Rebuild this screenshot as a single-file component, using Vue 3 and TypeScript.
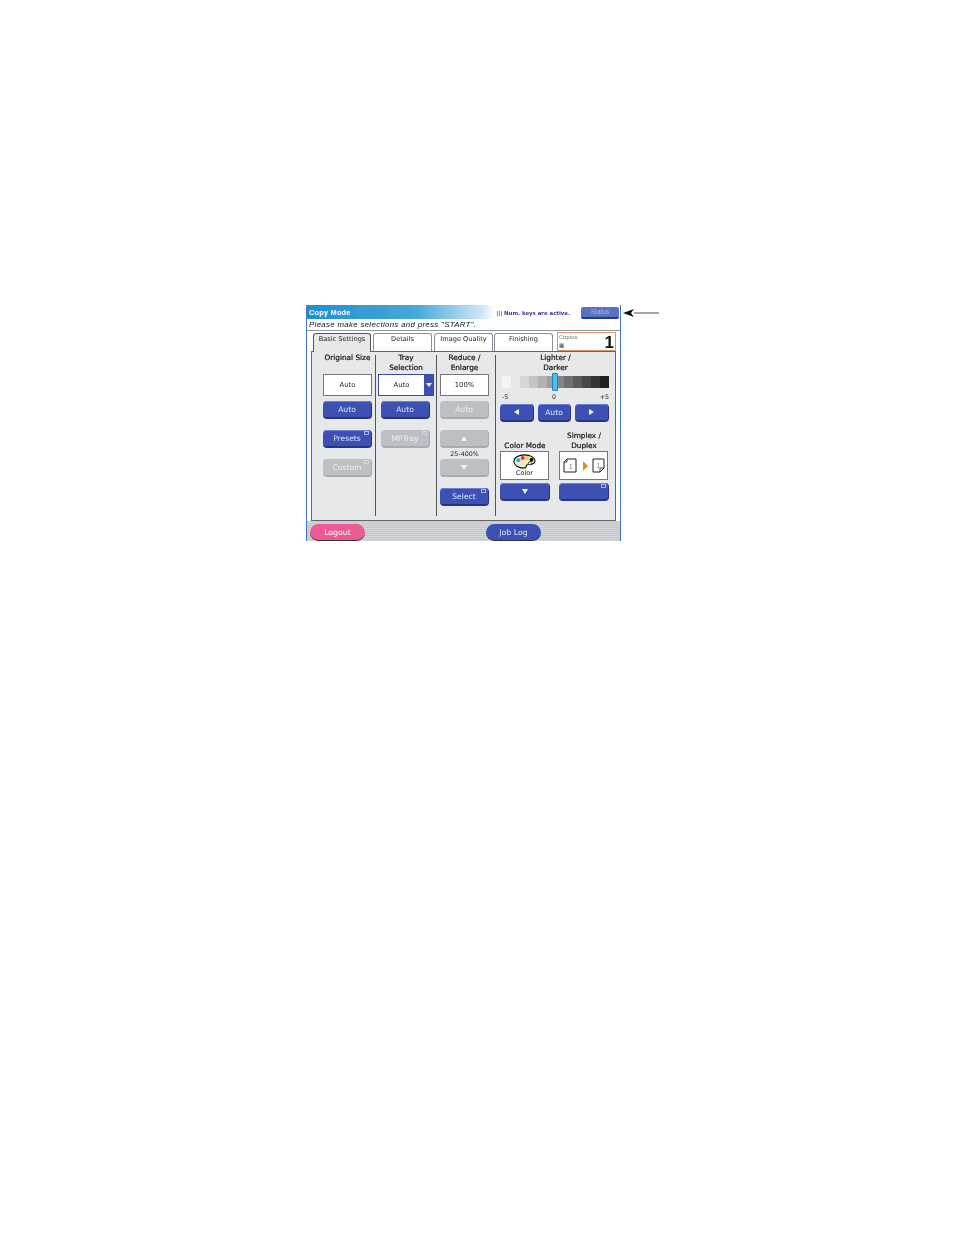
<script setup lang="ts">
const tabs = ['Basic Settings', 'Details', 'Image Quality', 'Finishing']
const shades = ['#f4f4f4', '#e8e8e8', '#d6d6d6', '#c4c4c4', '#b2b2b2', '#9e9e9e', '#858585', '#707070', '#5c5c5c', '#484848', '#343434', '#1e1e1e']
</script>

<template>
  <div class="page">
    <div class="window">
      <div class="titlebar">
        <span class="title">Copy Mode</span>
        <span class="keys"><span class="keys-icon">|||</span> Num. keys are active.</span>
        <button class="status">Status</button>
      </div>
      <div class="message">Please make selections and press "START".</div>
      <div class="tabrow">
        <div v-for="(t, i) in tabs" :key="t" class="tab" :class="{ active: i === 0 }">{{ t }}</div>
        <div class="copies">
          <div class="copies-text"><span>Copies</span><span class="copies-grid">▦</span></div>
          <div class="copies-num">1</div>
        </div>
      </div>

      <div class="panel">
        <section class="col col1">
          <h3 class="head one">Original Size</h3>
          <div class="box">Auto</div>
          <button class="btn blue m5">Auto</button>
          <button class="btn blue m11 corner">Presets</button>
          <button class="btn gray m11 corner">Custom</button>
        </section>

        <section class="col col2">
          <h3 class="head">Tray<br />Selection</h3>
          <div class="tray">
            <div class="tray-value">Auto</div>
            <div class="tray-arrow"><i class="tri down small"></i></div>
          </div>
          <button class="btn blue m5">Auto</button>
          <button class="btn gray m11 corner">MPTray</button>
        </section>

        <section class="col col3">
          <h3 class="head">Reduce /<br />Enlarge</h3>
          <div class="box">100%</div>
          <button class="btn gray m5">Auto</button>
          <button class="btn gray m11"><i class="tri up"></i></button>
          <div class="range">25-400%</div>
          <button class="btn gray"><i class="tri down"></i></button>
          <button class="btn blue m11 corner">Select</button>
        </section>

        <section class="col col4">
          <h3 class="head">Lighter /<br />Darker</h3>
          <div class="scale">
            <span v-for="s in shades" :key="s" class="shade" :style="{ background: s }"></span>
            <span class="thumb"></span>
          </div>
          <div class="scale-labels"><span>-5</span><span>0</span><span>+5</span></div>
          <div class="steppers">
            <button class="btn blue step"><i class="tri left"></i></button>
            <button class="btn blue step">Auto</button>
            <button class="btn blue step"><i class="tri right"></i></button>
          </div>
          <div class="modes">
            <div class="mode">
              <h3 class="head mode-head">Color Mode</h3>
              <div class="mode-box">
                <svg class="palette" viewBox="0 0 26 17" width="23" height="15">
                  <path d="M13 1C6 1 1 4 1 8.500 1 13 6 16 12 16c2.500 0 3-1 3-2 0-1.500 1-2 3-2 4 0 7-1 7-4.500C25 4 20 1 13 1z" fill="#efe9c8" stroke="#111" stroke-width="1.200" />
                  <circle cx="6" cy="7" r="2.200" fill="#19b5e6" />
                  <circle cx="11" cy="4.500" r="2.200" fill="#e8247c" />
                  <circle cx="16" cy="4.500" r="2.200" fill="#f4dc1e" />
                  <circle cx="21" cy="6.500" r="2.200" fill="#111" />
                  <circle cx="19" cy="10.500" r="1.800" fill="#fff" stroke="#111" stroke-width=".8" />
                </svg>
                <span class="mode-label">Color</span>
              </div>
              <button class="btn blue wide"><i class="tri down"></i></button>
            </div>
            <div class="mode">
              <h3 class="head mode-head">Simplex /<br />Duplex</h3>
              <div class="mode-box duplex">
                <svg viewBox="0 0 42 16" width="42" height="16">
                  <path d="M4 1h9v13H1V4z" fill="#fff" stroke="#222" stroke-width="1" />
                  <path d="M4 1v3H1" fill="none" stroke="#222" stroke-width=".8" />
                  <text x="6" y="10.500" class="page-num">1</text>
                  <path d="M20 3l5 5-5 5z" fill="#d9902a" />
                  <path d="M30 1h11v9l-4 4h-7z" fill="#fff" stroke="#222" stroke-width="1" />
                  <path d="M41 10h-4v4" fill="none" stroke="#222" stroke-width=".8" />
                  <text x="33.500" y="10" class="page-num">1</text>
                </svg>
              </div>
              <button class="btn blue wide corner"></button>
            </div>
          </div>
        </section>
      </div>

      <div class="footer">
        <button class="pill pink">Logout</button>
        <button class="pill navy">Job Log</button>
      </div>

      <svg class="pointer" viewBox="0 0 36 10" width="36" height="10">
        <path d="M11 5h25" stroke="#222" stroke-width=".8" />
        <path d="M0 5l11-4-3 4 3 4z" fill="#111" />
      </svg>
    </div>
  </div>
</template>

<style scoped>
.page {
  width: 954px;
  height: 1235px;
  padding: 305px 0 0 306px;
  box-sizing: border-box;
  background: #fff;
  font-family: "DejaVu Sans", "Liberation Sans", sans-serif;
  color: #222;
  overflow: hidden;
}
.window {
  position: relative;
  width: 315px;
  height: 236px;
  box-sizing: border-box;
  border: 1px solid #3f78c4;
  border-top: 0;
  background: #fff;
  filter: blur(0.35px);
}
.titlebar {
  height: 14px;
  display: flex;
  align-items: center;
  background: linear-gradient(90deg, #1f8fd0 0%, #49a8dc 35%, #cfe7f5 56%, #ffffff 60%, #ffffff 100%);
}
.title {
  margin-left: 2px;
  font: bold 7.400px "Liberation Sans", sans-serif;
  color: #fff;
  letter-spacing: .2px;
  padding-top: 1px;
}
.keys {
  margin-left: auto;
  padding-top: 1px;
  font-size: 5.400px;
  font-weight: bold;
  color: #4a2a96;
}
.keys-icon { color: #444; }
.status {
  width: 38px;
  height: 12px;
  margin: 1px 1px 0 11px;
  padding: 0;
  border: 0;
  border-bottom: 2px solid #233a86;
  border-radius: 2px;
  background: #5b72c4;
  color: #a9b6e4;
  font: 6.500px "Liberation Sans", sans-serif;
}
.message {
  height: 12px;
  line-height: 12px;
  padding-left: 2px;
  font: italic 7.800px/12px "Liberation Sans", sans-serif;
  letter-spacing: .35px;
  color: #111;
  border-bottom: 1px solid #8a9aa8;
  box-sizing: border-box;
}
.tabrow {
  height: 20px;
  display: flex;
  align-items: flex-end;
  padding-left: 6px;
  gap: 2px;
}
.tab {
  width: 59px;
  height: 18px;
  box-sizing: border-box;
  border: 1px solid #8b8f95;
  border-bottom: 0;
  border-radius: 3px 3px 0 0;
  background: #fff;
  font-size: 6.600px;
  line-height: 10px;
  text-align: center;
  white-space: nowrap;
}
.tab.active {
  width: 58px;
  background: #e6e8ea;
  border-color: #555;
  position: relative;
  z-index: 1;
  margin-bottom: -1px;
  height: 19px;
}
.tab:nth-child(4) { margin-left: -1px; }
.copies {
  width: 59px;
  height: 19px;
  margin-left: 2px;
  box-sizing: border-box;
  border: 1px solid #d9936a;
  display: flex;
  justify-content: space-between;
  background: #fff;
}
.copies-text {
  display: flex;
  flex-direction: column;
  font-size: 5.500px;
  line-height: 8px;
  color: #777;
  padding-left: 1px;
}
.copies-grid { color: #444; }
.copies-num {
  font: bold 17px/20px "Liberation Sans", sans-serif;
  color: #111;
  padding-right: 1px;
}
.panel {
  width: 305px;
  height: 170px;
  margin-left: 4px;
  box-sizing: border-box;
  border: 1px solid #666;
  background: #e6e8ea;
  display: grid;
  grid-template-columns: 64px 61px 59px 1fr;
}
.col {
  margin-top: 3px;
  height: 161px;
  box-sizing: border-box;
  border-right: 1px solid #555;
  display: flex;
  flex-direction: column;
  align-items: center;
}
.col1 { padding-left: 8px; }
.col3 { padding-right: 3px; }
.col4 { border-right: 0; }
.head {
  margin: -2px 0 0;
  height: 21px;
  font-size: 7.300px;
  font-weight: normal;
  line-height: 9.500px;
  text-align: center;
  color: #111;
  -webkit-text-stroke: .2px #111;
  white-space: nowrap;
}
.box {
  width: 49px;
  height: 22px;
  flex: none;
  box-sizing: border-box;
  border: 1px solid #777;
  background: #fff;
  font-size: 6.800px;
  line-height: 20px;
  text-align: center;
}
.btn {
  width: 49px;
  height: 18px;
  flex: none;
  padding: 0;
  box-sizing: border-box;
  border: 0;
  border-radius: 4px;
  font: 7.600px "DejaVu Sans", sans-serif;
  color: #fff;
  position: relative;
  display: flex;
  align-items: center;
  justify-content: center;
}
.col2 .btn { margin-right: 1px; }
.blue {
  background: #3d50b4;
  border-bottom: 2px solid #27337f;
  border-right: 1px solid #27337f;
  box-shadow: inset 0 1px 0 #6f80d6;
  color: #dfe4fa;
}
.gray {
  background: #bcbfc4;
  border-bottom: 2px solid #a8abb0;
  border-right: 1px solid #a8abb0;
  color: #eef0f2;
}
.m5 { margin-top: 5px; }
.m11 { margin-top: 11px; }
.corner::after {
  content: "";
  position: absolute;
  top: 1px;
  right: 2px;
  width: 3px;
  height: 2px;
  border: 1px solid #d8ddf5;
  opacity: .7;
}
.tray {
  width: 56px;
  height: 22px;
  flex: none;
  display: flex;
  box-sizing: border-box;
  border: 1px solid #3b4aa0;
}
.tray-value {
  flex: 1;
  background: #fff;
  font-size: 6.800px;
  line-height: 20px;
  text-align: center;
}
.tray-arrow {
  width: 9px;
  background: #3d50b4;
  display: flex;
  align-items: center;
  justify-content: center;
}
.tri {
  display: block;
  width: 0;
  height: 0;
  border-style: solid;
  border-color: transparent;
}
.tri.down { border-width: 5px 3.500px 0; border-top-color: #f2f4fa; }
.tri.small { border-width: 4px 3px 0; }
.tri.up { border-width: 0 3.500px 5px; border-bottom-color: #f2f4fa; }
.tri.left { border-width: 3.500px 5px 3.500px 0; border-right-color: #f2f4fa; }
.tri.right { border-width: 3.500px 0 3.500px 5px; border-left-color: #f2f4fa; }
.range {
  height: 11px;
  flex: none;
  font-size: 6.300px;
  line-height: 12px;
}
.scale {
  position: relative;
  width: 107px;
  height: 12px;
  margin-top: 2px;
  display: flex;
  flex: none;
}
.shade { flex: 1; }
.thumb {
  position: absolute;
  left: 50px;
  top: -3px;
  width: 6px;
  height: 18px;
  box-sizing: border-box;
  border: 1px solid #2a7fb5;
  border-radius: 1px;
  background: #45c3ec;
}
.scale-labels {
  width: 107px;
  height: 12px;
  margin-top: 3px;
  display: flex;
  justify-content: space-between;
  font-size: 6.300px;
  line-height: 12px;
}
.steppers {
  width: 109px;
  display: grid;
  grid-template-columns: 34px 33px 34px;
  gap: 4px;
  margin: 1px 2px 0 0;
}
.step { width: 100%; }
.modes {
  width: 109px;
  display: flex;
  justify-content: space-between;
  margin: 8px 2px 0 0;
}
.mode {
  width: 50px;
  display: flex;
  flex-direction: column;
  justify-content: flex-end;
  height: 71px;
  align-items: flex-start;
}
.mode-head { height: auto; margin: 0 0 1px; align-self: center; }
.mode-box {
  width: 49px;
  height: 29px;
  flex: none;
  box-sizing: border-box;
  border: 1px solid #777;
  background: #fff;
  display: flex;
  flex-direction: column;
  align-items: center;
  justify-content: center;
}
.palette { margin-bottom: 1px; }
.mode-label { font-size: 6.500px; line-height: 7px; }
.page-num { font: 6.500px "Liberation Sans", sans-serif; fill: #777; }
.wide { width: 50px; height: 18px; margin-top: 3px; }
.footer {
  height: 20px;
  display: flex;
  align-items: flex-end;
  padding-left: 3px;
  background: repeating-linear-gradient(180deg, #c3c7cd 0 1px, #d3d6da 1px 2px);
}
.pill {
  width: 55px;
  height: 17px;
  padding: 0;
  border: 0;
  border-radius: 9px;
  font: 7.800px "DejaVu Sans", sans-serif;
  border-bottom: 1px solid #333;
}
.pink { background: #ec5a94; color: #fff; }
.navy { background: #3d50b4; color: #dfe4fa; margin-left: 121px; }
.pointer {
  position: absolute;
  left: 316px;
  top: 3px;
}
</style>
